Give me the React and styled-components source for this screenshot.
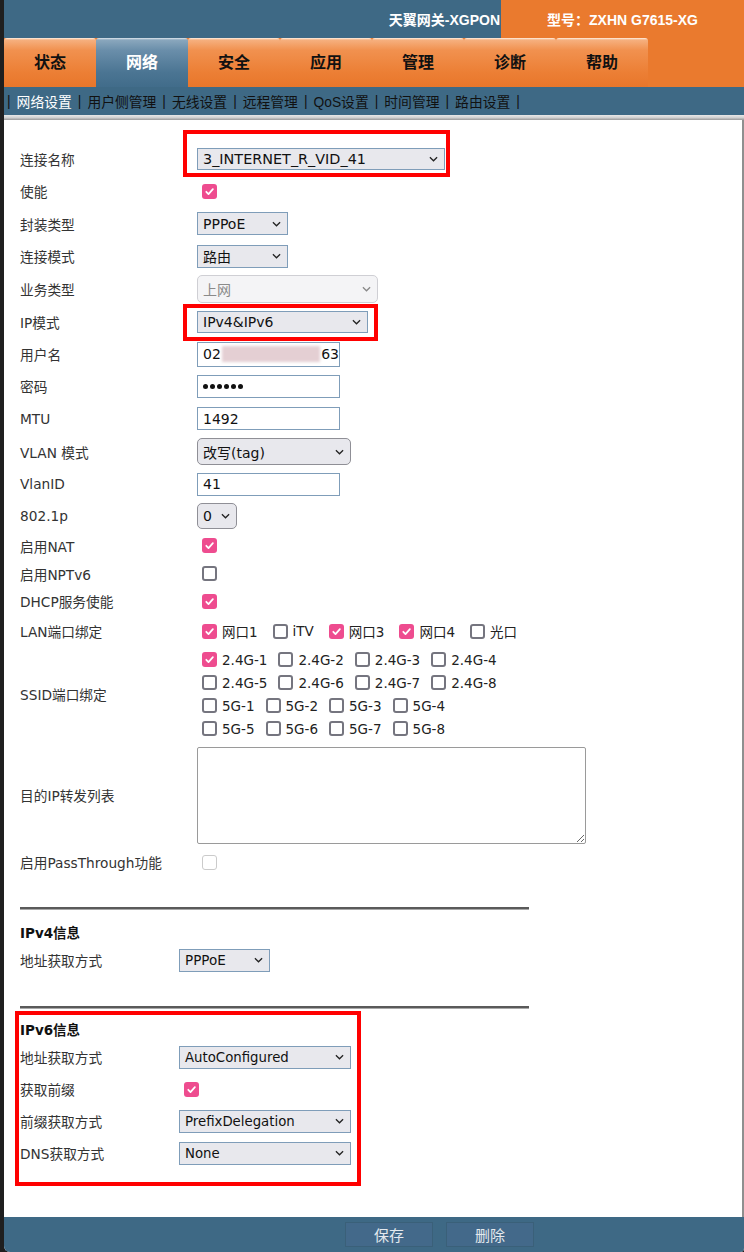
import React from 'react';
import styled, { createGlobalStyle } from 'styled-components';

const GlobalStyle = createGlobalStyle`
  html, body { margin: 0; padding: 0; background: #1f1f1f; }
  body { font-family: "DejaVu Sans", "Noto Sans CJK SC", sans-serif; }
`;

const tabs = ['状态', '网络', '安全', '应用', '管理', '诊断', '帮助'];
const subNav = ['网络设置', '用户侧管理', '无线设置', '远程管理', 'QoS设置', '时间管理', '路由设置'];

const lanPorts = [
  { name: '网口1', on: true },
  { name: 'iTV' },
  { name: '网口3', on: true },
  { name: '网口4', on: true },
  { name: '光口' },
];

const ssidRows = [
  ['2.4G-1', '2.4G-2', '2.4G-3', '2.4G-4'],
  ['2.4G-5', '2.4G-6', '2.4G-7', '2.4G-8'],
  ['5G-1', '5G-2', '5G-3', '5G-4'],
  ['5G-5', '5G-6', '5G-7', '5G-8'],
];

const Chevron = ({ color = '#222' }) => (
  <svg width="9" height="6" viewBox="0 0 10 6">
    <path d="M1 1l4 4 4-4" fill="none" stroke={color} strokeWidth="1.4" />
  </svg>
);

const Check = ({ on, disabled }) => (
  <Box $on={on} $disabled={disabled}>
    {on && (
      <svg width="11" height="11" viewBox="0 0 12 12">
        <path d="M2.5 6.3l2.4 2.5 4.8-5.4" fill="none" stroke="#fff" strokeWidth="1.9" strokeLinecap="round" strokeLinejoin="round" />
      </svg>
    )}
  </Box>
);

const Select = ({ value, w, h = 22, variant = 'plain', size }) => (
  <SelectBox $w={w} $h={h} $variant={variant} $size={size}>
    <span>{value}</span>
    <Chevron color={variant === 'disabled' ? '#888' : '#222'} />
  </SelectBox>
);

const App = () => {
  return (
    <>
      <GlobalStyle />
      <Page>
        <TopBar>
          <Title>天翼网关-XGPON</Title>
          <ModelBox>型号：ZXHN G7615-XG</ModelBox>
        </TopBar>
        <TabBar>
          {tabs.map((t) => (
            <Tab key={t} $active={t === '网络'}>{t}</Tab>
          ))}
        </TabBar>
        <SubNav>
          <Sep>|</Sep>
          {subNav.map((s) => (
            <React.Fragment key={s}>
              <NavItem $active={s === '网络设置'}>{s}</NavItem>
              <Sep>|</Sep>
            </React.Fragment>
          ))}
        </SubNav>
        <Band />
        <Content>
          <Row $h={32}>
            <Label>连接名称</Label>
            <Cell>
              <Marked>
                <Select value="3_INTERNET_R_VID_41" w={248} size={14.4} />
                <RedMark $l={-14} $t={-18} $w={267} $h={47} />
              </Marked>
            </Cell>
          </Row>
          <Row $h={32}>
            <Label>使能</Label>
            <Cell><Check on /></Cell>
          </Row>
          <Row $h={33}>
            <Label>封装类型</Label>
            <Cell><Select value="PPPoE" w={91} h={23} /></Cell>
          </Row>
          <Row $h={32}>
            <Label>连接模式</Label>
            <Cell><Select value="路由" w={91} h={23} /></Cell>
          </Row>
          <Row $h={33}>
            <Label>业务类型</Label>
            <Cell><Select value="上网" w={181} h={28} variant="disabled" /></Cell>
          </Row>
          <Row $h={33}>
            <Label>IP模式</Label>
            <Cell>
              <Marked>
                <Select value="IPv4&IPv6" w={171} />
                <RedMark $l={-14} $t={-7} $w={195} $h={37} />
              </Marked>
            </Cell>
          </Row>
          <Row $h={32}>
            <Label>用户名</Label>
            <Cell>
              <Field $h={25}>02<Blur />63</Field>
            </Cell>
          </Row>
          <Row $h={32}>
            <Label>密码</Label>
            <Cell>
              <Field>
                {[0, 1, 2, 3, 4, 5].map((i) => <Dot key={i} />)}
              </Field>
            </Cell>
          </Row>
          <Row $h={33}>
            <Label>MTU</Label>
            <Cell><Field>1492</Field></Cell>
          </Row>
          <Row $h={33}>
            <Label>VLAN 模式</Label>
            <Cell><Select value="改写(tag)" w={154} h={27} variant="rounded" /></Cell>
          </Row>
          <Row $h={32}>
            <Label>VlanID</Label>
            <Cell><Field>41</Field></Cell>
          </Row>
          <Row $h={31}>
            <Label>802.1p</Label>
            <Cell><Select value="0" w={40} h={26} variant="rounded" /></Cell>
          </Row>
          <Row $h={29}>
            <Label>启用NAT</Label>
            <Cell><Check on /></Cell>
          </Row>
          <Row $h={27}>
            <Label>启用NPTv6</Label>
            <Cell><Check /></Cell>
          </Row>
          <Row $h={28}>
            <Label>DHCP服务使能</Label>
            <Cell><Check on /></Cell>
          </Row>
          <Row $h={32}>
            <Label>LAN端口绑定</Label>
            <Cell>
              {lanPorts.map((p) => (
                <Opt key={p.name} $trail={10}>
                  <Check on={p.on} />
                  <OptText>{p.name}</OptText>
                </Opt>
              ))}
            </Cell>
          </Row>
          <Row $h={94}>
            <Label>SSID端口绑定</Label>
            <SsidGrid>
              {ssidRows.map((row, i) => (
                <SsidRow key={i}>
                  {row.map((s) => (
                    <Opt key={s} $trail={6}>
                      <Check on={s === '2.4G-1'} />
                      <OptText>{s}</OptText>
                    </Opt>
                  ))}
                </SsidRow>
              ))}
            </SsidGrid>
          </Row>
          <Row $h={108}>
            <Label>目的IP转发列表</Label>
            <Cell><Area readOnly /></Cell>
          </Row>
          <Row $h={26}>
            <Label>启用PassThrough功能</Label>
            <Cell><Check disabled /></Cell>
          </Row>

          <Rule $top={32} />
          <Heading>IPv4信息</Heading>
          <Row $h={32}>
            <Label $w={159}>地址获取方式</Label>
            <Cell><Select value="PPPoE" w={91} h={23} size={13.5} /></Cell>
          </Row>

          <Rule $top={30} />
          <Ipv6Box>
            <Heading>IPv6信息</Heading>
            <Row $h={32}>
              <Label $w={159}>地址获取方式</Label>
              <Cell><Select value="AutoConfigured" w={172} h={23} size={13.3} /></Cell>
            </Row>
            <Row $h={32}>
              <Label $w={159}>获取前缀</Label>
              <Cell><Check on /></Cell>
            </Row>
            <Row $h={32}>
              <Label $w={159}>前缀获取方式</Label>
              <Cell><Select value="PrefixDelegation" w={172} h={23} size={13.3} /></Cell>
            </Row>
            <Row $h={32}>
              <Label $w={159}>DNS获取方式</Label>
              <Cell><Select value="None" w={172} h={23} size={13.3} /></Cell>
            </Row>
          </Ipv6Box>
        </Content>
        <Footer>
          <FootButton>保存</FootButton>
          <FootButton>删除</FootButton>
        </Footer>
      </Page>
    </>
  );
};

const Page = styled.div`
  margin-left: 4px;
  width: 740px;
  height: 1252px;
  display: flex;
  flex-direction: column;
  background: #fff;
  border-bottom-left-radius: 6px;
  border-bottom-right-radius: 4px;
  overflow: hidden;
`;

const TopBar = styled.div`
  display: flex;
  height: 38px;
  background: #3e6985;
`;

const Title = styled.div`
  flex: 1;
  display: flex;
  align-items: center;
  justify-content: flex-end;
  padding-right: 1px;
  color: #fff;
  font: bold 14px "Liberation Sans", "Noto Sans CJK SC", sans-serif;
`;

const ModelBox = styled.div`
  width: 243px;
  display: flex;
  align-items: center;
  justify-content: center;
  background: #ea7a2e;
  color: #fff;
  font: bold 14px "Liberation Sans", "Noto Sans CJK SC", sans-serif;
`;

const TabBar = styled.div`
  display: flex;
  height: 49px;
  background: #ea7a2e;
`;

const Tab = styled.div`
  width: 92px;
  display: flex;
  align-items: center;
  justify-content: center;
  padding-bottom: 3px;
  box-sizing: border-box;
  border-radius: 3px 3px 0 0;
  font: bold 16px "Noto Sans CJK SC", sans-serif;
  color: ${(p) => (p.$active ? '#fff' : '#111')};
  background: ${(p) =>
    p.$active
      ? 'linear-gradient(#dfe8ee 0, #8aa7bd 2px, #6a8eaa 25%, #4b7593 70%, #416c8a 100%)'
      : 'linear-gradient(#fff1e4 0, #f6b07f 2px, #f1914f 25%, #ec7f35 70%, #e8762b 100%)'};
`;

const SubNav = styled.div`
  height: 28px;
  display: flex;
  align-items: center;
  background: #3e6985;
  font: 13.8px "Liberation Sans", "Noto Sans CJK SC", sans-serif;
`;

const Sep = styled.span`
  color: #111;
  margin: 0 6px;

  &:first-child {
    margin-left: 3px;
  }
`;

const NavItem = styled.span`
  color: ${(p) => (p.$active ? '#fff' : '#111')};
`;

const Band = styled.div`
  height: 5px;
  background: linear-gradient(#e8e8e8, #d2d2d2 50%, #9a9a9a);
`;

const Content = styled.div`
  flex: 1;
  padding: 23px 0 0 16px;
  border-right: 2px solid #8f8f8f;
`;

const Row = styled.div`
  display: flex;
  align-items: center;
  height: ${(p) => p.$h}px;
`;

const Label = styled.div`
  width: ${(p) => p.$w || 177}px;
  flex-shrink: 0;
  font-size: 13.7px;
  color: #333;
`;

const Cell = styled.div`
  display: flex;
  align-items: center;
`;

const Marked = styled.div`
  position: relative;
`;

const RedMark = styled.div`
  position: absolute;
  left: ${(p) => p.$l}px;
  top: ${(p) => p.$t}px;
  width: ${(p) => p.$w}px;
  height: ${(p) => p.$h}px;
  box-sizing: border-box;
  border: 4px solid #ff0000;
  pointer-events: none;
`;

const SelectBox = styled.div`
  box-sizing: border-box;
  width: ${(p) => p.$w}px;
  height: ${(p) => p.$h}px;
  display: flex;
  align-items: center;
  justify-content: space-between;
  padding: 0 6px 0 5px;
  font-size: ${(p) => p.$size || 14}px;
  white-space: nowrap;
  color: ${(p) => (p.$variant === 'disabled' ? '#8a8a8a' : '#111')};
  background: ${(p) => (p.$variant === 'disabled' ? '#f4f4f6' : '#e8e8ed')};
  border: 1px solid
    ${(p) =>
      p.$variant === 'plain' ? '#7f9db9' : p.$variant === 'disabled' ? '#cfcfd4' : '#8f8f96'};
  border-radius: ${(p) => (p.$variant === 'plain' ? '0' : '5px')};
`;

const Field = styled.div`
  box-sizing: border-box;
  width: 143px;
  height: ${(p) => p.$h || 23}px;
  display: flex;
  align-items: center;
  padding-left: 5px;
  font-size: 14px;
  color: #111;
  background: #fff;
  border: 1px solid #7f9db9;
`;

const Blur = styled.span`
  display: inline-block;
  width: 100px;
  height: 16px;
  margin: 0 1px;
  background: #e4cfd3;
  filter: blur(1.5px);
`;

const Dot = styled.span`
  width: 5px;
  height: 5px;
  margin-right: 2px;
  border-radius: 50%;
  background: #111;
`;

const Box = styled.span`
  box-sizing: border-box;
  width: 15px;
  height: 15px;
  margin-left: 5px;
  flex-shrink: 0;
  display: inline-flex;
  align-items: center;
  justify-content: center;
  border-radius: 3px;
  background: ${(p) => (p.$on ? '#ee4c8f' : '#fff')};
  border: ${(p) => (p.$on ? 'none' : p.$disabled ? '1.5px solid #cbcbcb' : '2px solid #75757f')};
`;

const Opt = styled.span`
  display: inline-flex;
  align-items: center;
  margin-right: ${(p) => p.$trail}px;
`;

const OptText = styled.span`
  margin-left: 5px;
  font-size: 13.5px;
  color: #222;
`;

const SsidGrid = styled.div`
  display: flex;
  flex-direction: column;
`;

const SsidRow = styled.div`
  display: flex;
  align-items: center;
  height: 23px;
`;

const Area = styled.textarea`
  box-sizing: border-box;
  width: 389px;
  height: 97px;
  margin: 0;
  border: 1px solid #9a9a9a;
  border-radius: 2px;
  background: #fff;
`;

const Rule = styled.div`
  width: 509px;
  margin-top: ${(p) => p.$top}px;
  border-top: 2px solid #5a5a5a;
  border-bottom: 1px solid #a8a8a8;
`;

const Heading = styled.div`
  height: 24px;
  margin-top: 10px;
  display: flex;
  align-items: center;
  font-size: 13.5px;
  font-weight: bold;
  color: #111;
`;

const Ipv6Box = styled.div`
  box-sizing: border-box;
  width: 346px;
  margin: 2px 0 0 -5px;
  padding: 0 0 13px 1px;
  border: 4px solid #ff0000;

  ${Heading} {
    margin-top: 2px;
  }
`;

const Footer = styled.div`
  height: 35px;
  display: flex;
  align-items: center;
  gap: 13px;
  padding-left: 341px;
  background: #3e6985;
`;

const FootButton = styled.div`
  box-sizing: border-box;
  width: 88px;
  height: 25px;
  display: flex;
  align-items: center;
  justify-content: center;
  background: #43698a;
  border: 1px solid #3a6079;
  color: #e4e9ee;
  font: 15px "Noto Sans CJK SC", sans-serif;
`;

export default App;
